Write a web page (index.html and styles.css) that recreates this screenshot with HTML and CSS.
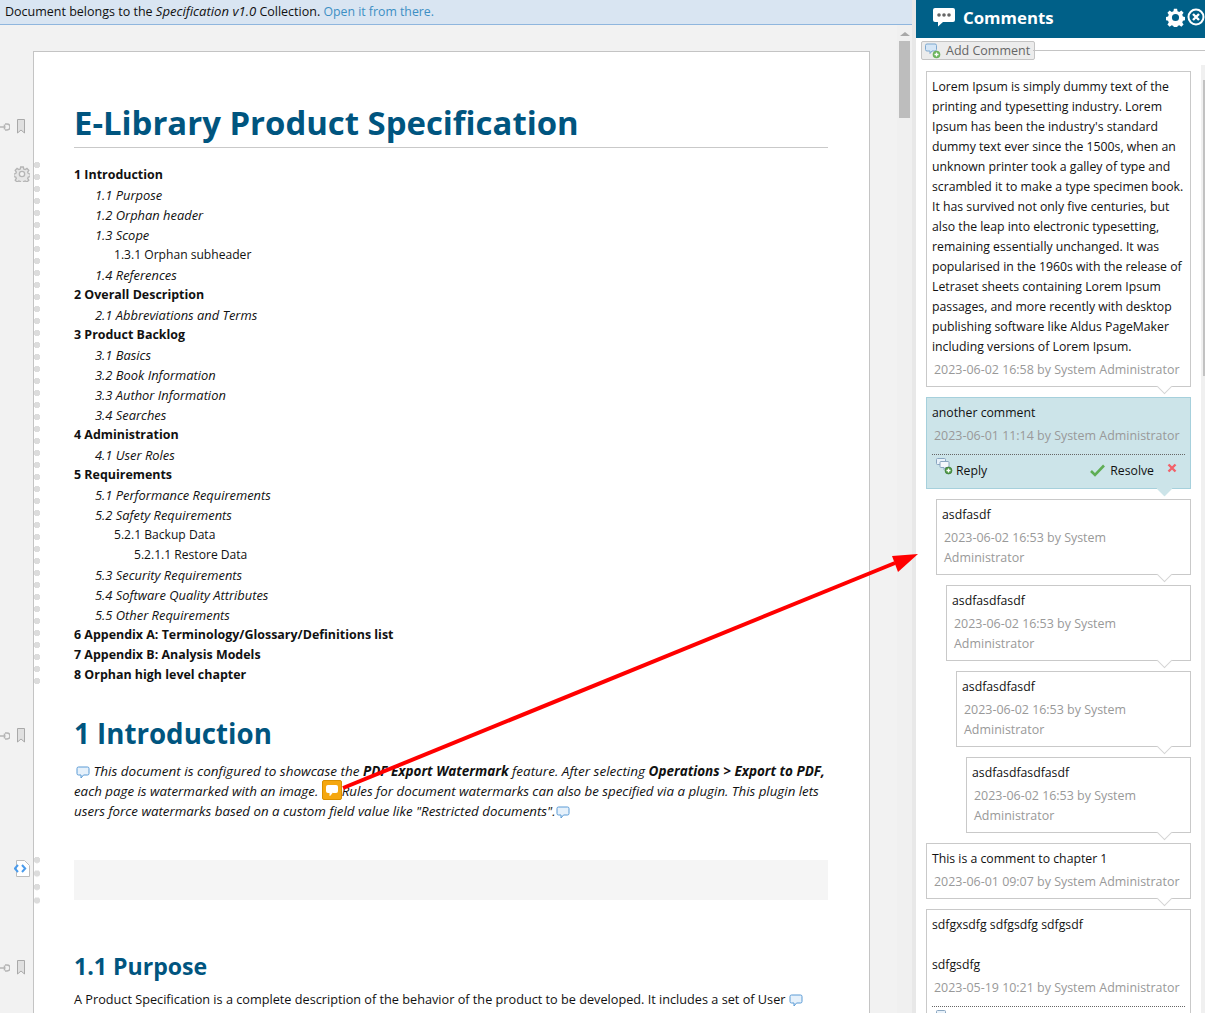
FILE: index.html
```html
<!DOCTYPE html>
<html lang="en">
<head>
    <meta charset="UTF-8">
    <title>E-Library Product Specification</title>
    <link rel="stylesheet" href="styles.css">
</head>
<body>

<svg class="defs" width="0" height="0">
    <symbol id="bubble" viewBox="0 0 14 13">
        <path d="M2.500 1h9A1.500 1.500 0 0 1 13 2.500v5A1.500 1.500 0 0 1 11.500 9H7.500L5 12V9H2.500A1.500 1.500 0 0 1 1 7.500v-5A1.500 1.500 0 0 1 2.500 1z" fill="#e6f1fb" stroke="#5b9bd5"/>
    </symbol>
    <symbol id="add-bubble" viewBox="0 0 16 16">
        <path d="M2 1h8a1.500 1.500 0 0 1 1.500 1.500v4A1.500 1.500 0 0 1 10 8H7l-2 2.500V8H2A1.500 1.500 0 0 1 .5 6.500v-4A1.500 1.500 0 0 1 2 1z" fill="#d5e6f6" stroke="#7fa9d0"/>
        <circle cx="11.500" cy="11.500" r="3.800" fill="#6cb35c"/>
        <path d="M11.500 9.500v4M9.500 11.500h4" stroke="#fff" stroke-width="1.300"/>
    </symbol>
    <symbol id="reply-bubble" viewBox="0 0 17 17">
        <path d="M1.500 .5h7a1 1 0 0 1 1 1v4a1 1 0 0 1-1 1H6L4.500 8.500v-2h-3a1 1 0 0 1-1-1v-4a1 1 0 0 1 1-1z" fill="#e9f2fa" stroke="#8aa6c0"/>
        <path d="M5 3.500h7a1 1 0 0 1 1 1v4a1 1 0 0 1-1 1H9.500L8 11.500v-2H5a1 1 0 0 1-1-1v-4a1 1 0 0 1 1-1z" fill="#f4f8fc" stroke="#8aa6c0"/>
        <circle cx="12.500" cy="12.500" r="3.500" fill="#4f9a45" stroke="#2f6f2a" stroke-width=".6"/>
        <path d="M12.500 10.500v4M10.500 12.500h4" stroke="#fff" stroke-width="1.300"/>
    </symbol>
    <symbol id="bookmark" viewBox="0 0 8 15">
        <path d="M.5.500h7v13.500L4 11 .5 14z" fill="#e0e0e0" stroke="#a9a9a9"/>
    </symbol>
    <symbol id="link" viewBox="0 0 11 8">
        <path d="M0 4h6.500M6 1h2a3 3 0 0 1 0 6H6M5.500 1.500v5" fill="none" stroke="#b5b5b5" stroke-width="1.500"/>
    </symbol>
</svg>

<div class="app">
    <main class="main">
        <div class="banner">Document belongs to the <i>Specification v1.0</i> Collection. <a href="#">Open it from there.</a></div>

        <div class="viewport">
            <div class="page">
                <h1 class="doc-title">
                    <span class="gutter-link"><svg width="11" height="8"><use href="#link"/></svg><svg width="8" height="15"><use href="#bookmark"/></svg></span>
                    E-Library Product Specification
                </h1>

                <div class="toc">
                    <span class="gear">
                        <svg width="16" height="16" viewBox="0 0 24 24"><path d="M12 8a4 4 0 1 0 0 8 4 4 0 0 0 0-8zM10 1.500h4l.6 3 2.200.9 2.600-1.700 2.800 2.800-1.700 2.600.9 2.200 3 .6v4l-3 .6-.9 2.200 1.700 2.600-2.800 2.800-2.600-1.700-2.200.9-.6 3h-4l-.6-3-2.200-.9-2.600 1.700-2.800-2.800 1.700-2.600-.9-2.200-3-.6v-4l3-.6.9-2.200-1.700-2.600 2.800-2.800 2.600 1.700 2.200-.9z" fill="#e6e6e6" fill-rule="evenodd" stroke="#b5b5b5" stroke-width="2"/></svg>
                    </span>
                    <span class="dots toc-dots"></span>
                    <div class="toc-1">1 Introduction</div>
                    <div class="toc-2">1.1 Purpose</div>
                    <div class="toc-2">1.2 Orphan header</div>
                    <div class="toc-2">1.3 Scope</div>
                    <div class="toc-3">1.3.1 Orphan subheader</div>
                    <div class="toc-2">1.4 References</div>
                    <div class="toc-1">2 Overall Description</div>
                    <div class="toc-2">2.1 Abbreviations and Terms</div>
                    <div class="toc-1">3 Product Backlog</div>
                    <div class="toc-2">3.1 Basics</div>
                    <div class="toc-2">3.2 Book Information</div>
                    <div class="toc-2">3.3 Author Information</div>
                    <div class="toc-2">3.4 Searches</div>
                    <div class="toc-1">4 Administration</div>
                    <div class="toc-2">4.1 User Roles</div>
                    <div class="toc-1">5 Requirements</div>
                    <div class="toc-2">5.1 Performance Requirements</div>
                    <div class="toc-2">5.2 Safety Requirements</div>
                    <div class="toc-3">5.2.1 Backup Data</div>
                    <div class="toc-4">5.2.1.1 Restore Data</div>
                    <div class="toc-2">5.3 Security Requirements</div>
                    <div class="toc-2">5.4 Software Quality Attributes</div>
                    <div class="toc-2">5.5 Other Requirements</div>
                    <div class="toc-1">6 Appendix A: Terminology/Glossary/Definitions list</div>
                    <div class="toc-1">7 Appendix B: Analysis Models</div>
                    <div class="toc-1">8 Orphan high level chapter</div>
                </div>

                <h2 class="chapter">
                    <span class="gutter-link"><svg width="11" height="8"><use href="#link"/></svg><svg width="8" height="15"><use href="#bookmark"/></svg></span>
                    1 Introduction
                </h2>
                <p class="intro">
                    <span class="intro-lead"><svg class="inline-icon lead-icon" width="14" height="13"><use href="#bubble"/></svg> This document is configured to showcase the <b>PDF Export Watermark</b> feature. After selecting <b>Operations &gt; Export to PDF,</b></span><br>
                    each page is watermarked with an image. <span class="marker"><svg width="14" height="13" viewBox="0 0 14 13"><path d="M2.500 1.500h9a1 1 0 0 1 1 1v5a1 1 0 0 1-1 1H7.500L5 11.500v-3H2.500a1 1 0 0 1-1-1v-5a1 1 0 0 1 1-1z" fill="#fff" stroke="#fff"/></svg></span>Rules for document watermarks can also be specified via a plugin. This plugin lets<br>
                    users force watermarks based on a custom field value like "Restricted documents".<svg class="inline-icon" width="14" height="13"><use href="#bubble"/></svg>
                </p>

                <div class="code-block">
                    <span class="code-icon">
                        <svg width="16" height="17" viewBox="0 0 16 17"><path d="M2.500 .5h8l5 5v11h-13z" fill="#fff" stroke="#bdbdbd"/><path d="M4 5 .8 8.500 4 12M8 5l3.200 3.500L8 12" fill="none" stroke="#4a9bec" stroke-width="2"/></svg>
                    </span>
                    <span class="dots code-dots"></span>
                </div>

                <h3 class="section">
                    <span class="gutter-link"><svg width="11" height="8"><use href="#link"/></svg><svg width="8" height="15"><use href="#bookmark"/></svg></span>
                    1.1 Purpose
                </h3>
                <p class="body-text">A Product Specification is a complete description of the behavior of the product to be developed. It includes a set of User <svg class="inline-icon" width="14" height="13"><use href="#bubble"/></svg></p>
            </div>
            <div class="scrollbar">
                <div class="scroll-arrow"></div>
                <div class="scroll-thumb"></div>
            </div>
        </div>
    </main>

    <aside class="panel">
        <header class="panel-head">
            <svg width="24" height="20" viewBox="0 0 24 20"><path d="M3 1h18a2 2 0 0 1 2 2v10a2 2 0 0 1-2 2H11l-5 4.500V15H3a2 2 0 0 1-2-2V3a2 2 0 0 1 2-2z" fill="#fff"/><circle cx="7" cy="8" r="1.800" fill="#666"/><circle cx="12" cy="8" r="1.800" fill="#666"/><circle cx="17" cy="8" r="1.800" fill="#666"/></svg>
            <span class="panel-title">Comments</span>
            <span class="panel-tools">
                <svg width="19" height="19" viewBox="0 0 24 24"><path d="M12 7.500a4.500 4.500 0 1 0 0 9 4.500 4.500 0 0 0 0-9zM10 1h4l.6 3 2.200.9 2.600-1.700 2.800 2.800-1.700 2.600.9 2.200 3 .6v4l-3 .6-.9 2.200 1.700 2.600-2.800 2.800-2.600-1.700-2.200.9-.6 3h-4l-.6-3-2.200-.9-2.600 1.700-2.800-2.800 1.700-2.600-.9-2.200-3-.6v-4l3-.6.9-2.200-1.700-2.600 2.800-2.800 2.600 1.700 2.200-.9z" fill="#fff" fill-rule="evenodd"/></svg>
                <svg width="18" height="18" viewBox="0 0 18 18"><circle cx="9" cy="9" r="7.500" fill="none" stroke="#fff" stroke-width="2"/><path d="M6 6l6 6M12 6l-6 6" stroke="#fff" stroke-width="2.400"/></svg>
            </span>
        </header>

        <div class="add-row">
            <button class="add-btn" type="button"><svg width="16" height="16"><use href="#add-bubble"/></svg>Add Comment</button>
        </div>

        <div class="comments">
            <div class="comment">
                <div class="comment-text">Lorem Ipsum is simply dummy text of the<br>printing and typesetting industry. Lorem<br>Ipsum has been the industry's standard<br>dummy text ever since the 1500s, when an<br>unknown printer took a galley of type and<br>scrambled it to make a type specimen book.<br>It has survived not only five centuries, but<br>also the leap into electronic typesetting,<br>remaining essentially unchanged. It was<br>popularised in the 1960s with the release of<br>Letraset sheets containing Lorem Ipsum<br>passages, and more recently with desktop<br>publishing software like Aldus PageMaker<br>including versions of Lorem Ipsum.</div>
                <div class="comment-meta">2023-06-02 16:58 by System Administrator</div>
            </div>

            <div class="comment active">
                <div class="comment-text">another comment</div>
                <div class="comment-meta">2023-06-01 11:14 by System Administrator</div>
                <div class="comment-actions">
                    <span class="action"><svg class="reply-icon" width="17" height="17"><use href="#reply-bubble"/></svg>Reply</span>
                    <span class="action resolve"><svg class="check" width="15" height="13" viewBox="0 0 15 13"><path d="M1 7l4 4 9-9.500" fill="none" stroke="#5fae55" stroke-width="2.600"/></svg>Resolve</span>
                    <svg class="remove" width="10" height="10" viewBox="0 0 10 10"><path d="M1.500 1.500l7 7M8.500 1.500l-7 7" stroke="#f2626a" stroke-width="2.400"/></svg>
                </div>
            </div>

            <div class="comment reply-1">
                <div class="comment-text">asdfasdf</div>
                <div class="comment-meta">2023-06-02 16:53 by System<br>Administrator</div>
            </div>
            <div class="comment reply-2">
                <div class="comment-text">asdfasdfasdf</div>
                <div class="comment-meta">2023-06-02 16:53 by System<br>Administrator</div>
            </div>
            <div class="comment reply-3">
                <div class="comment-text">asdfasdfasdf</div>
                <div class="comment-meta">2023-06-02 16:53 by System<br>Administrator</div>
            </div>
            <div class="comment reply-4">
                <div class="comment-text">asdfasdfasdfasdf</div>
                <div class="comment-meta">2023-06-02 16:53 by System<br>Administrator</div>
            </div>

            <div class="comment">
                <div class="comment-text">This is a comment to chapter 1</div>
                <div class="comment-meta">2023-06-01 09:07 by System Administrator</div>
            </div>

            <div class="comment">
                <div class="comment-text">sdfgxsdfg sdfgsdfg sdfgsdf<br><br>sdfgsdfg</div>
                <div class="comment-meta">2023-05-19 10:21 by System Administrator</div>
                <div class="comment-actions">
                    <span class="action"><svg class="reply-icon" width="17" height="17"><use href="#reply-bubble"/></svg></span>
                </div>
            </div>
        </div>

        <div class="panel-scroll"><div class="panel-thumb"></div></div>
    </aside>
</div>

<svg class="arrow" width="1205" height="1013" viewBox="0 0 1205 1013">
    <path d="M343 788 895 563" stroke="#f00" stroke-width="4" fill="none"/>
    <path d="M918 554 892 556 898 572z" fill="#f00"/>
</svg>

</body>
</html>
```

FILE: styles.css
```css
* {
    box-sizing: border-box;
}

html, body {
    margin: 0;
    height: 100%;
    overflow: hidden;
}

body {
    font-family: "Open Sans", "Noto Sans", sans-serif;
    font-size: 12.25px;
    color: #111;
    position: relative;
}

.defs {
    position: absolute;
}

.app {
    display: flex;
    height: 1013px;
}

/* left side */
.main {
    width: 916px;
    display: flex;
    flex-direction: column;
    background: #e8e8e8;
}

.banner {
    height: 25px;
    margin-right: 4px;
    padding: 2px 5px 0;
    font-size: 12.5px;
    background: #d9e5f2;
    border-bottom: 1px solid #8fb6de;
    white-space: nowrap;
}

.banner i {
    font-size: 13.1px;
}

.banner a {
    color: #3d8fc4;
    text-decoration: none;
    font-size: 12.3px;
}

.viewport {
    flex: 1;
    display: flex;
    min-height: 0;
    overflow: hidden;
    padding: 26px 0 0 33px;
    background: #f2f2f2;
}

.page {
    width: 837px;
    height: 1200px;
    flex: none;
    background: #fff;
    border: 1px solid #c4c4c4;
    padding: 0 41px 0 40px;
}

.scrollbar {
    width: 19px;
    margin: -26px 0 0 27px;
    background: #f0f0f0;
    border-right: 4px solid #e8e8e8;
    padding: 7px 2px 0 2px;
}

.scroll-arrow {
    width: 0;
    margin: 0 auto 5px;
    border: 5px solid transparent;
    border-top: 0;
    border-bottom: 4px solid #a8a8a8;
}

.scroll-thumb {
    height: 77px;
    background: #bdbdbd;
}

.gutter-link {
    position: absolute;
    left: -75px;
    top: 21px;
    width: 30px;
    display: flex;
    align-items: center;
    gap: 7px;
}

.doc-title {
    position: relative;
    margin: 46px 0 0;
    height: 50px;
    font-size: 32.9px;
    line-height: 50px;
    font-weight: 700;
    color: #00557f;
    border-bottom: 1px solid #c9c9c9;
    white-space: nowrap;
}

.toc {
    position: relative;
    margin-top: 17px;
    line-height: 20px;
}

.toc div {
    height: 20px;
    white-space: nowrap;
}

.toc-1 {
    font-weight: 700;
    font-size: 12.45px;
}

.toc-2 {
    padding-left: 21px;
    font-style: italic;
    font-size: 12.9px;
}

.toc-3 {
    padding-left: 40px;
    font-size: 12.1px;
}

.toc-4 {
    padding-left: 60px;
    font-size: 12.1px;
}

.gear {
    position: absolute;
    left: -60px;
    top: 1px;
}

.dots {
    position: absolute;
    left: -40px;
    width: 6px;
    background-image: radial-gradient(circle at 3px 3px, #dcdcdc 3px, transparent 3.500px);
    background-repeat: repeat-y;
}

.toc-dots {
    top: -3px;
    height: 526px;
    background-size: 6px 12px;
}

.chapter {
    position: relative;
    margin: 28px 0 0;
    height: 40px;
    font-size: 27.7px;
    line-height: 40px;
    font-weight: 700;
    color: #00557f;
}

.chapter .gutter-link {
    top: 15px;
}

.intro {
    margin: 8px 0 0;
    line-height: 20px;
    font-style: italic;
    font-size: 13.3px;
    white-space: nowrap;
}

.intro-lead {
    font-size: 13.5px;
}

.intro b {
    font-size: 13.5px;
}

.inline-icon {
    vertical-align: -3px;
}

.lead-icon {
    margin-left: 2px;
}

.marker {
    display: inline-flex;
    align-items: center;
    justify-content: center;
    width: 20px;
    height: 20px;
    margin: -1px 0 1px;
    vertical-align: top;
    background: #f5a70f;
    border: 1px solid #d98f00;
    border-radius: 2px;
}

.code-block {
    position: relative;
    height: 40px;
    margin-top: 39px;
    background: #f5f5f5;
}

.code-icon {
    position: absolute;
    left: -60px;
    top: 0;
}

.code-dots {
    top: -3px;
    height: 47px;
    background-size: 6px 13.500px;
}

.section {
    position: relative;
    margin: 48px 0 0;
    height: 36px;
    font-size: 23.1px;
    line-height: 36px;
    font-weight: 700;
    color: #00557f;
}

.section .gutter-link {
    top: 12px;
}

.body-text {
    margin: 5px 0 0;
    line-height: 20px;
    font-size: 12.7px;
    white-space: nowrap;
}

/* comments panel */
.panel {
    position: relative;
    width: 289px;
    background: #fff;
    overflow: hidden;
}

.panel-head {
    height: 38px;
    display: flex;
    align-items: center;
    gap: 7px;
    padding: 0 0 4px 16px;
    background: #006088;
    color: #fff;
}

.panel-title {
    font-size: 16.8px;
    font-weight: 700;
}

.panel-tools {
    margin-left: auto;
    display: flex;
    align-items: center;
    gap: 2px;
}

.add-row {
    position: relative;
    height: 25px;
    padding: 3px 0 0 5px;
}

.add-row::after {
    content: "";
    position: absolute;
    left: 117px;
    right: 0;
    top: 12px;
    border-top: 1px solid #c4c4c4;
}

.add-btn {
    height: 19px;
    width: 114px;
    padding: 0 0 0 3px;
    display: flex;
    align-items: center;
    gap: 5px;
    font: inherit;
    font-size: 12.5px;
    color: #666;
    background: #ececec;
    border: 1px solid #c4c4c4;
    border-radius: 2px;
    white-space: nowrap;
}

.comments {
    padding: 8px 14px 0 10px;
    display: flex;
    flex-direction: column;
    gap: 10px;
}

.comment {
    position: relative;
    padding: 5px 5px 6px 5px;
    border: 1px solid #c9c9c9;
    background: #fff;
    white-space: nowrap;
}

.comment::after {
    content: "";
    position: absolute;
    right: 20px;
    bottom: -6px;
    width: 10px;
    height: 10px;
    background: inherit;
    border-right: 1px solid #d5d5d5;
    border-bottom: 1px solid #d5d5d5;
    transform: rotate(45deg);
}

.comment-text {
    line-height: 20px;
}

.comment-meta {
    margin: 3px 0 0 2px;
    line-height: 20px;
    font-size: 12.45px;
    color: #999;
}

.comment.active {
    padding-bottom: 5px;
    background: #cce4e9;
    border-color: #a6d0dc;
}

.comment.active::after {
    border-color: #cce4e9;
}

.comment-actions {
    position: relative;
    display: flex;
    align-items: center;
    margin-top: 8px;
    padding: 3px 8px 1px 4px;
    height: 29px;
    border-top: 1px dotted #666;
}

.action {
    display: flex;
    align-items: center;
    gap: 3px;
}

.reply-icon {
    margin-top: -7px;
}

.resolve {
    margin-left: auto;
    gap: 5px;
}

.remove {
    margin: -4px 0 0 13px;
}

.reply-1 {
    margin-left: 10px;
}

.reply-2 {
    margin-left: 20px;
}

.reply-3 {
    margin-left: 30px;
}

.reply-4 {
    margin-left: 40px;
}

.panel-scroll {
    position: absolute;
    right: 0;
    top: 65px;
    bottom: 0;
    width: 4px;
    padding: 15px 0 0 2px;
    background: #f0f0f0;
}

.panel-thumb {
    height: 296px;
    background: #c2c2c2;
}

/* red arrow added over the screenshot */
.arrow {
    position: absolute;
    left: 0;
    top: 0;
    pointer-events: none;
}
```
